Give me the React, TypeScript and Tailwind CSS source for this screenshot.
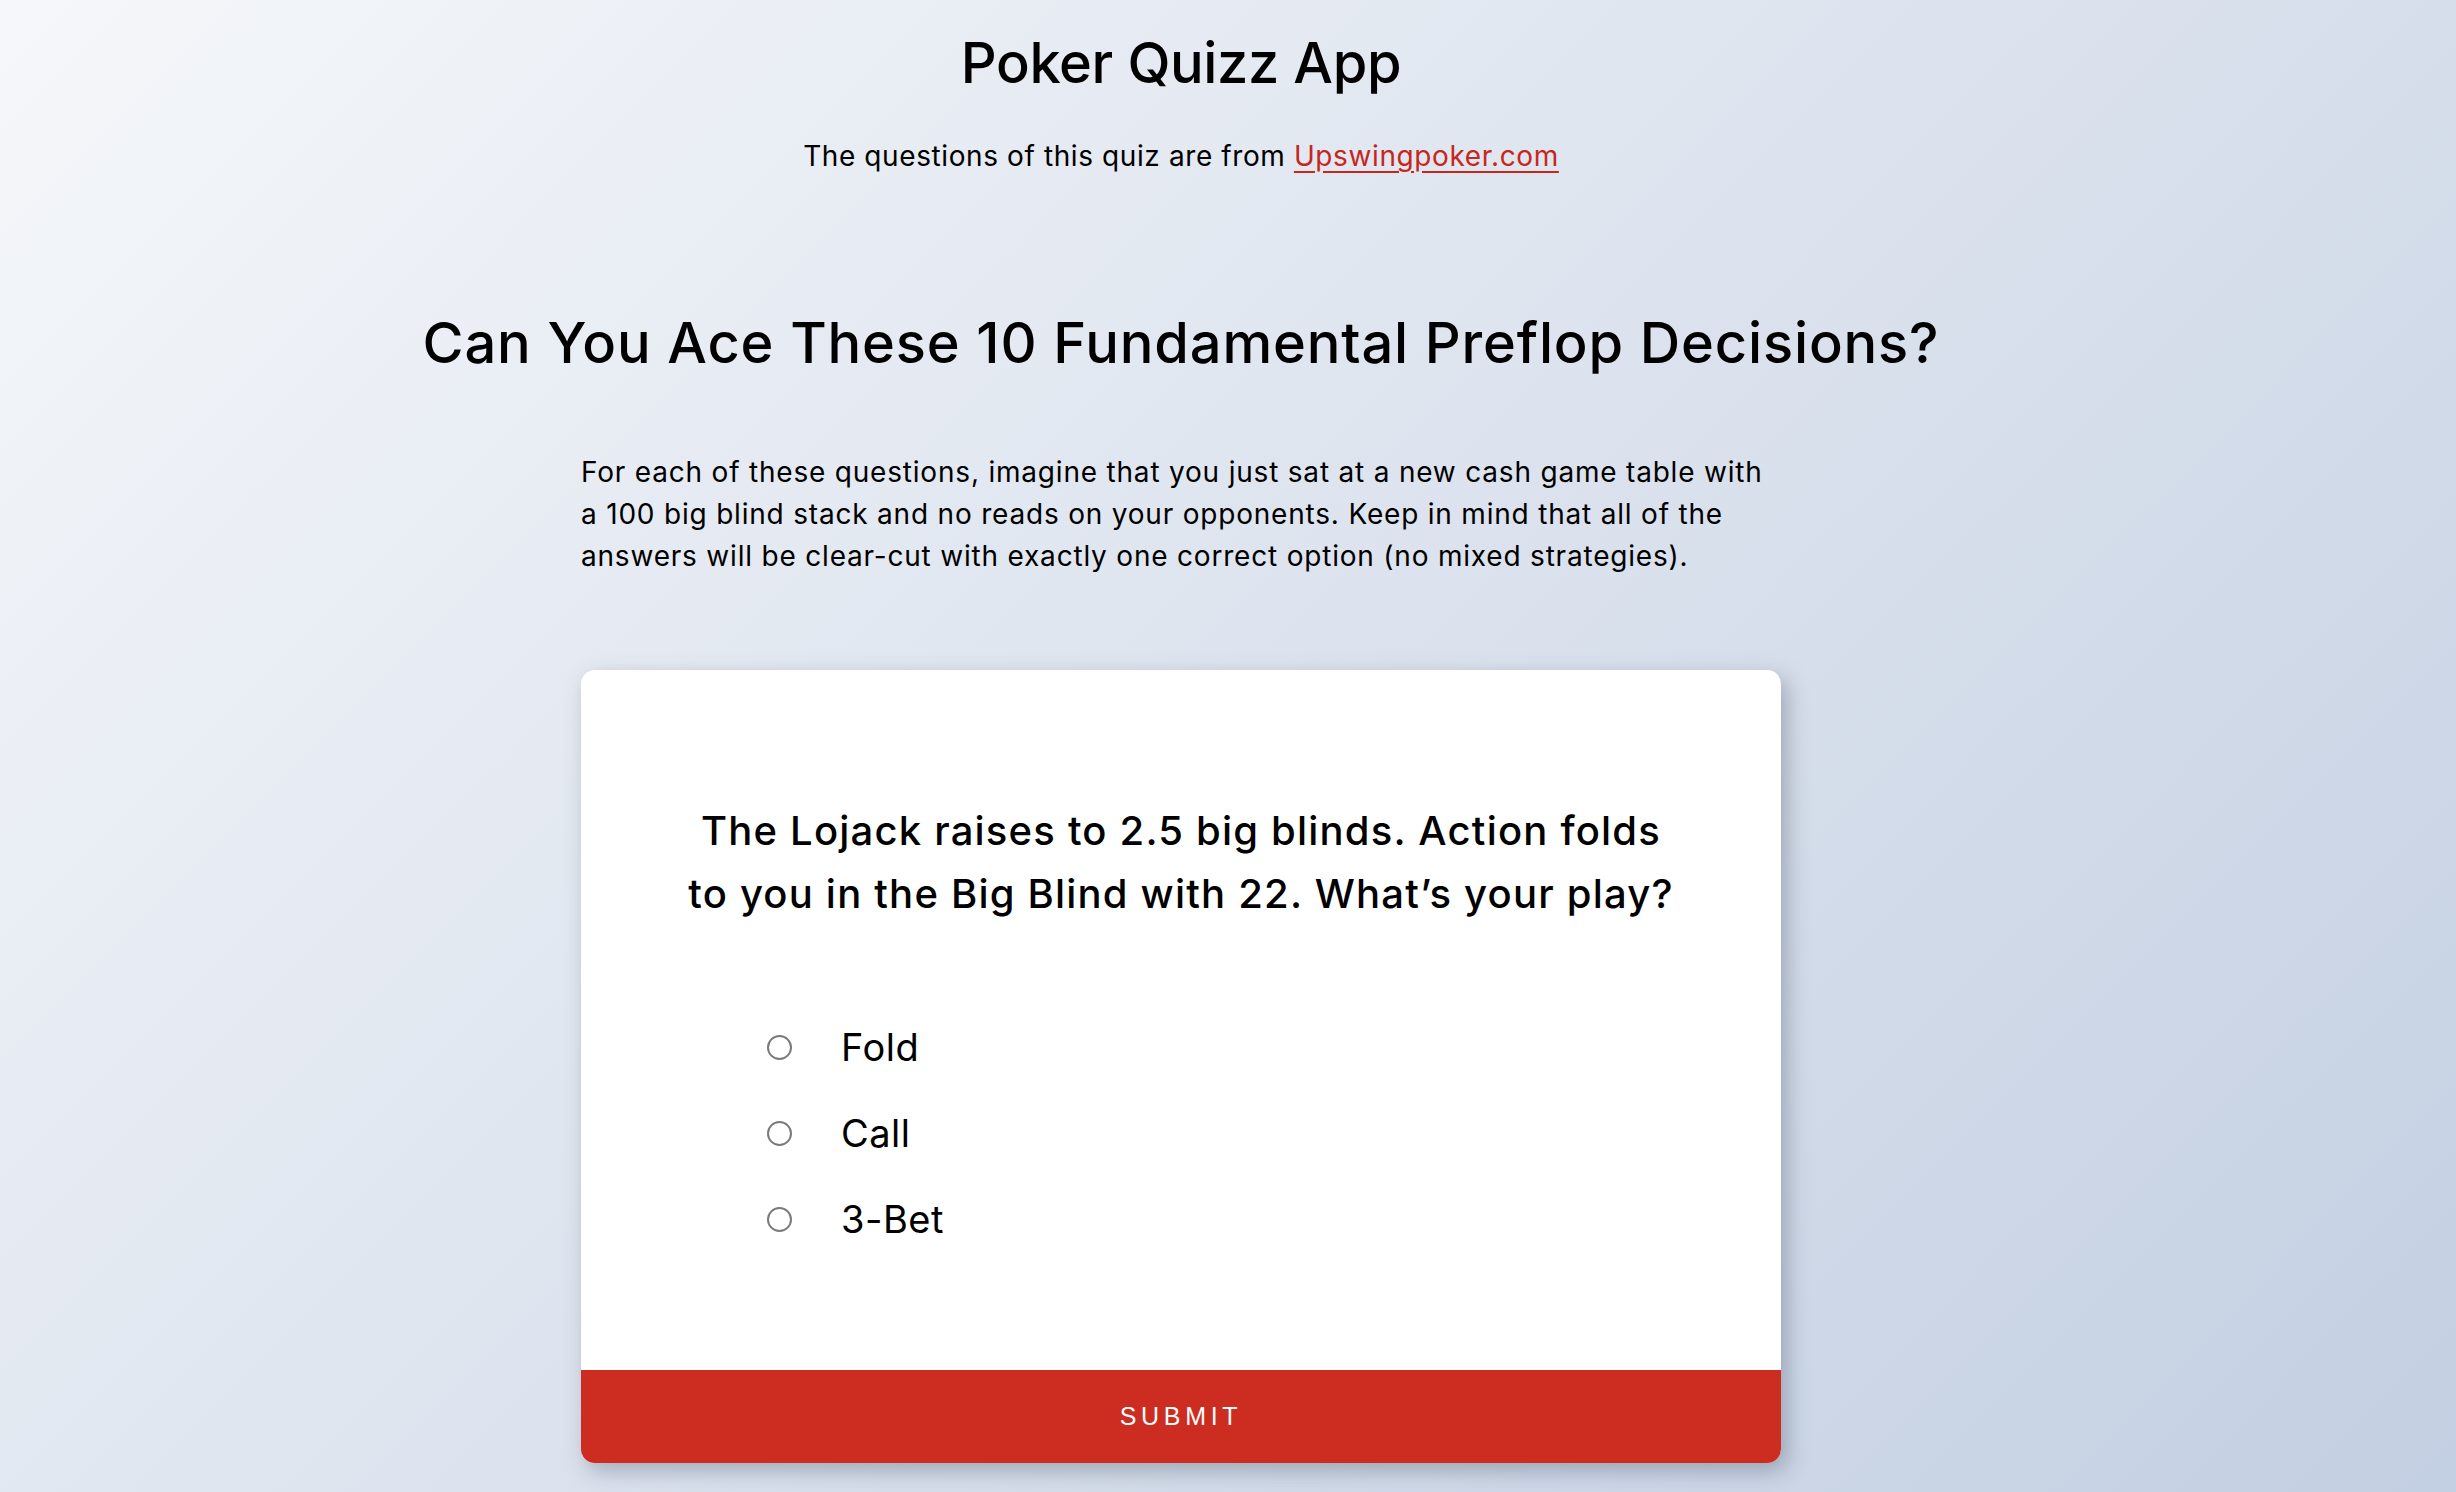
import { useState } from 'react';

const OPTIONS = ['Fold', 'Call', '3-Bet'];

export default function App() {
  const [picked, setPicked] = useState<string | null>(null);

  return (
    <div className="min-h-screen w-full bg-[linear-gradient(135deg,#f5f7fa_0%,#c3cfe2_100%)] font-[Inter,sans-serif] text-black">
      <div className="flex flex-col items-center pr-[94px] pb-[29px]">
        <h1 className="mt-[31px] text-[56px] leading-[64px] font-medium tracking-[-0.4px]">Poker Quizz App</h1>
        <p className="mt-[41px] text-[28px] leading-[40px] tracking-[0.6px]">
          The questions of this quiz are from{' '}
          <a href="#" className="text-[#c7261d] underline underline-offset-[5px]">
            Upswingpoker.com
          </a>
        </p>

        <h2 className="mt-[135px] text-[56px] leading-[64px] font-medium tracking-[0.85px]">
          Can You Ace These 10 Fundamental Preflop Decisions?
        </h2>

        <p className="mt-[76px] w-[1200px] text-[28px] leading-[42px] tracking-[0.8px]">
          For each of these questions, imagine that you just sat at a new cash game table with a 100 big blind stack
          and no reads on your opponents. Keep in mind that all of the answers will be clear-cut with exactly one
          correct option (no mixed strategies).
        </p>

        <div className="mt-[93px] flex w-[1200px] flex-col overflow-hidden rounded-[14px] bg-white shadow-[6px_8px_22px_rgba(60,70,90,0.35)]">
          <h3 className="px-[100px] pt-[129px] text-center text-[40px] leading-[63px] font-medium tracking-[1.2px]">
            The Lojack raises to 2.5 big blinds. Action folds to you in the Big Blind with 22. What’s your play?
          </h3>

          <div className="mt-[79px] flex flex-col pl-[186px]">
            {OPTIONS.map((opt) => (
              <label key={opt} className="flex h-[86px] cursor-pointer items-center gap-[49px]">
                <input
                  type="radio"
                  name="answer"
                  checked={picked === opt}
                  onChange={() => setPicked(opt)}
                  className="h-[25px] w-[25px] appearance-none rounded-full border-2 border-[#7a7a7a] bg-white checked:border-[7px] checked:border-[#cc2c20]"
                />
                <span className="text-[38px] tracking-[0.5px]">{opt}</span>
              </label>
            ))}
          </div>

          <button className="mt-[108px] h-[93px] w-full bg-[#cd2c20] font-['Liberation_Sans',Arial,sans-serif] text-[25px] tracking-[4.7px] text-white">
            SUBMIT
          </button>
        </div>
      </div>
    </div>
  );
}
